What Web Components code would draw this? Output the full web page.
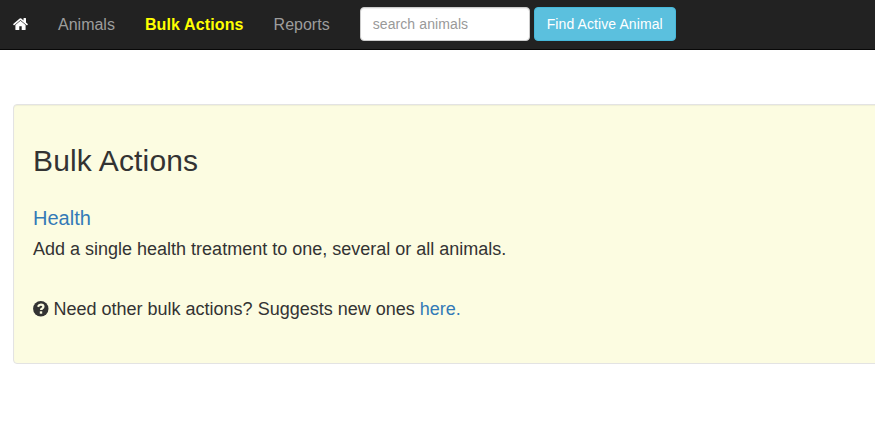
<!DOCTYPE html>
<html lang="en"><head><meta charset="utf-8"><title>Bulk Actions</title>
<style>
html,body{margin:0;background:#fff;overflow:hidden}
body{font-family:"Liberation Sans",Arial,sans-serif;font-size:18px;line-height:1.42857;color:#333}
</style></head><body>
<app-nav>
<nav-link icon><home-icon></home-icon></nav-link><nav-link>Animals</nav-link><nav-link active>Bulk Actions</nav-link><nav-link>Reports</nav-link>
<animal-search slot="tools"></animal-search>
</app-nav>
<content-well>
<span slot="title">Bulk Actions</span>
<action-item><text-link slot="name">Health</text-link>Add a single health treatment to one, several or all animals.</action-item>
<help-note>Need other bulk actions? Suggests new ones <text-link>here.</text-link></help-note>
</content-well>
<script>
const define=(name,html)=>customElements.define(name,class extends HTMLElement{
  constructor(){super();this.attachShadow({mode:'open'}).innerHTML=html;}
});
define('app-nav',`<style>
:host{display:flex;box-sizing:border-box;height:50px;background:#222;border-bottom:1px solid #080808;font-size:16px;line-height:20px}
nav{display:flex}
</style><nav><slot></slot></nav><slot name="tools"></slot>`);
define('nav-link',`<style>
:host{display:block;padding:15px;color:#9d9d9d;white-space:nowrap}
:host([active]){color:#ff0;font-weight:bold;letter-spacing:.125px}
:host([icon]){color:#fff;padding-left:13px}
</style><slot></slot>`);
define('home-icon',`<style>:host{display:block;width:15px;height:20px}svg{display:block}</style>
<svg width="15" height="20" viewBox="0 0 15 20" fill="currentColor"><path d="M7.5 5.8 2.4 10v4.4q0 .6.6.6h3.3v-3.8h2.4V15H12q.6 0 .6-.6V10z"/><path d="M14.8 9.1l-1.8-1.5V3.4q0-.4-.4-.4h-1.7q-.4 0-.4.4v2.1L8.3 3.6q-.8-.6-1.6 0L.2 9.1q-.2.2 0 .4l.6.7q.2.2.5 0l6.2-5.1 6.2 5.1q.3.2.5 0l.6-.7q.2-.2 0-.4z"/></svg>`);
define('animal-search',`<style>
:host{display:flex;align-items:flex-start;gap:4px;padding:7px 15px}
input,button{box-sizing:border-box;height:34px;margin:0;padding:6px 12px;font:14px/20px "Liberation Sans",Arial,sans-serif;border-radius:4px;letter-spacing:.1px}
input{width:170px;border:1px solid #ccc;background:#fff;box-shadow:inset 0 1px 1px rgba(0,0,0,.075)}
input::placeholder{color:#999;opacity:1}
button{width:142px;border:1px solid #46b8da;background:#5bc0de;color:#fff;white-space:nowrap}
</style><input placeholder="search animals"><button>Find Active Animal</button>`);
define('content-well',`<style>
:host{display:block;box-sizing:border-box;height:260px;margin:54px -15px 0 13px;padding:19px;border:1px solid #e3e3e3;border-radius:4px;background:#fcfce1;box-shadow:inset 0 1px 1px rgba(0,0,0,.05)}
h2{margin:20px 0 0;font-size:30px;line-height:33px;font-weight:400;letter-spacing:.15px}
</style><h2><slot name="title"></slot></h2><slot></slot>`);
define('action-item',`<style>
:host{display:block;margin-top:30px;line-height:26px}
h4{margin:0 0 7px;font-size:20px;line-height:22px;font-weight:400}
</style><h4><slot name="name"></slot></h4><slot></slot>`);
define('help-note',`<style>
:host{display:flex;align-items:center;gap:4.5px;margin-top:34px;line-height:26px}
svg{display:block;width:16px;height:16px}
</style><svg viewBox="0 0 16 16"><circle cx="7.8" cy="7.7" r="7.7" fill="#333"/><path d="M5 5.8q.9-2.1 2.9-2.1 2.5 0 2.5 2.1 0 1.1-1.3 1.8-1 .5-1 1.5" fill="none" stroke="#fcfce1" stroke-width="2.3"/><path d="M6.8 10.3h2.4v2.4H6.8z" fill="#fcfce1"/></svg><span><slot></slot></span>`);
define('text-link',`<style>:host{display:inline;color:#337ab7}</style><slot></slot>`);
</script></body></html>
